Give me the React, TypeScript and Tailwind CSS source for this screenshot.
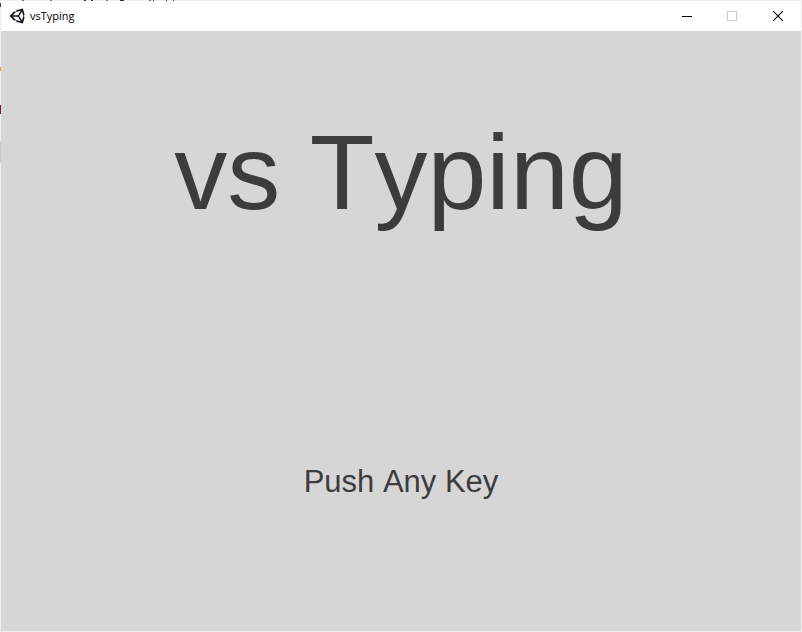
import React from "react";

function UnityLogo() {
  return (
    <svg width="16" height="16" viewBox="0 0 512 512" fill="#111" aria-hidden="true">
      <path d="M498.11,206.4,445.31,14.72,248.2,66.08,219,116.14l-59.2-.43L15.54,256,159.82,396.32l59.17-.43,29.24,50,197.08,51.36,52.8-191.62-30-49.63ZM223.77,124.2,374.55,86.51,288,232.33H114.87Zm0,263.63L114.87,279.71H288l86.55,145.81Zm193,14L330.17,256l86.58-145.84L458.56,256Z" />
    </svg>
  );
}

function TitleBar() {
  return (
    <header className="flex h-[30px] items-center bg-white pl-2">
      <UnityLogo />
      <h1 className="ml-[5px] flex-1 font-['Open_Sans',sans-serif] text-[11px] leading-4 text-black">vsTyping</h1>
      <button type="button" aria-label="Minimize" className="flex h-full w-[45px] items-center justify-center">
        <svg width="10" height="10" viewBox="0 0 10 10" stroke="#000" shapeRendering="crispEdges">
          <path d="M0 5.5H10" />
        </svg>
      </button>
      <button type="button" aria-label="Maximize" disabled className="flex h-full w-[46px] items-center justify-center">
        <svg width="10" height="10" viewBox="0 0 10 10" fill="none" stroke="#ccc" shapeRendering="crispEdges">
          <rect x="0.5" y="0.5" width="9" height="9" />
        </svg>
      </button>
      <button type="button" aria-label="Close" className="flex h-full w-[46px] items-center justify-center">
        <svg width="10" height="10" viewBox="0 0 10 10" stroke="#000" strokeWidth="1.1">
          <path d="M0 0 10 10M10 0 0 10" />
        </svg>
      </button>
    </header>
  );
}

/* Slivers of the window that lies behind, seen past the top and left edges. */
function TopEdge() {
  return (
    <svg className="block h-px w-full" height="1" shapeRendering="crispEdges" aria-hidden="true">
      <path d="M22 .5h2M50 .5h2M106 .5h2M149 .5h2" stroke="#777" />
      <path d="M84 .5h2M91 .5h2M120 .5h4M153 .5h1M166 .5h1M173 .5h1" stroke="#333" />
    </svg>
  );
}

function LeftEdge() {
  return (
    <svg className="block w-px" width="1" height="170" shapeRendering="crispEdges" aria-hidden="true">
      <path d="M.5 2v4" stroke="#444" />
      <path d="M.5 66v4" stroke="#e8a030" />
      <path d="M.5 104v9" stroke="#6b2030" />
      <path d="M.5 140v22" stroke="#c8c8c8" />
    </svg>
  );
}

export default function App() {
  return (
    <div className="flex min-h-screen flex-col bg-[#eeeeee] pb-px pr-px">
      <TopEdge />
      <div className="flex flex-1">
        <LeftEdge />
        <div className="flex flex-1 flex-col">
          <TitleBar />
          <main className="flex flex-1 flex-col items-center bg-[#d6d6d6] pt-[81px] font-['Liberation_Sans',Arial,sans-serif] text-[#3c3c3c] [font-kerning:none]">
            <h2 className="text-[106px] leading-[120px]">vs Typing</h2>
            <p className="mt-[232px] text-[31px] leading-[36px]">Push Any Key</p>
          </main>
        </div>
      </div>
    </div>
  );
}
